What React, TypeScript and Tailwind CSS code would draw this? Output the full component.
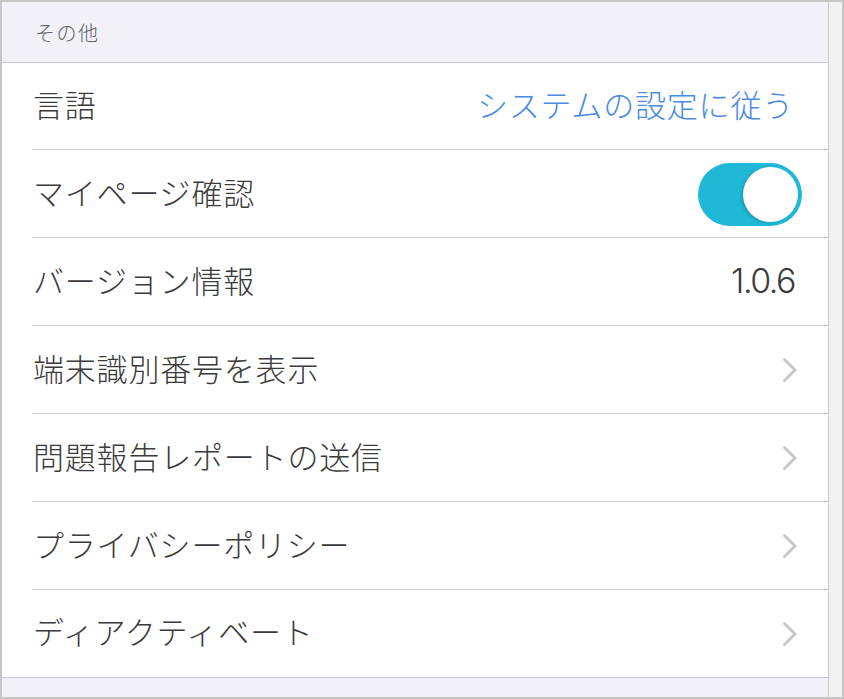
import React, { useState } from "react";

const font = {
  fontFamily: '"Noto Sans CJK JP", "Noto Sans", sans-serif',
};

const Chevron = () => (
  <svg width="16" height="26" viewBox="0 0 16 26" fill="none" className="mr-[4px]">
    <path
      d="M2.5 2.5 L13 13 L2.5 23.5"
      stroke="#c7c7cc"
      strokeWidth="3"
      strokeLinecap="round"
      strokeLinejoin="round"
    />
  </svg>
);

const Toggle = ({ on, onChange }: { on: boolean; onChange: () => void }) => (
  <button
    onClick={onChange}
    className={
      "relative w-[104px] h-[63px] rounded-full transition-colors " +
      (on ? "bg-[#1fb8d6]" : "bg-[#e5e5ea]")
    }
  >
    <span
      className={
        "absolute top-[4px] w-[55px] h-[55px] rounded-full bg-white shadow-[-2px_1px_3px_rgba(0,0,0,0.15)] transition-all " +
        (on ? "left-[45px]" : "left-[4px]")
      }
    />
  </button>
);

interface RowProps {
  label: string;
  right?: React.ReactNode;
  first?: boolean;
  last?: boolean;
}

const Row = ({ label, right, first, last }: RowProps) => (
  <div
    className={
      "relative flex items-center pl-[31px] pr-[26px] " +
      (first || last ? "h-[87px]" : "h-[88px]")
    }
  >
    <span className="mb-[6px] text-[31px] text-[#3b3b3b] font-light leading-none tracking-[0.8px]">
      {label}
    </span>
    <div className="ml-auto flex items-center">{right}</div>
    {!last && (
      <div className="absolute bottom-0 left-[30px] right-0 h-px bg-[#c8c7cc]" />
    )}
  </div>
);

export default function App() {
  const [myPage, setMyPage] = useState(true);

  return (
    <div
      className="w-[844px] h-[699px] border-2 border-[#c6c6c6] flex bg-[#f1f1f7] overflow-hidden"
      style={font}
    >
      <div className="flex-1 flex flex-col border-r border-[#c8c8c8]">
        <div className="h-[61px] pl-[33px] pt-[21px] border-b border-[#c8c7cc] text-[20px] font-light leading-none text-[#5f5f64] tracking-[1.5px]">
          その他
        </div>
        <div className="bg-white border-b border-[#c8c7cc]">
          <Row
            first
            label="言語"
            right={
              <span className="mb-[6px] mr-[8px] text-[31px] font-light leading-none text-[#4a8ae0] tracking-[0.8px]">
                システムの設定に従う
              </span>
            }
          />
          <Row
            label="マイページ確認"
            right={<Toggle on={myPage} onChange={() => setMyPage(!myPage)} />}
          />
          <Row
            label="バージョン情報"
            right={
              <span className="mb-[2px] mr-[7px] font-['Inter',sans-serif] font-light text-[34px] leading-none text-[#3b3b3b] tracking-[-1.5px]">
                1.0.6
              </span>
            }
          />
          <Row label="端末識別番号を表示" right={<Chevron />} />
          <Row label="問題報告レポートの送信" right={<Chevron />} />
          <Row label="プライバシーポリシー" right={<Chevron />} />
          <Row label="ディアクティベート" right={<Chevron />} last />
        </div>
        <div className="flex-1" />
      </div>
      <div className="w-[13px] bg-[#f2f2f2]" />
    </div>
  );
}
